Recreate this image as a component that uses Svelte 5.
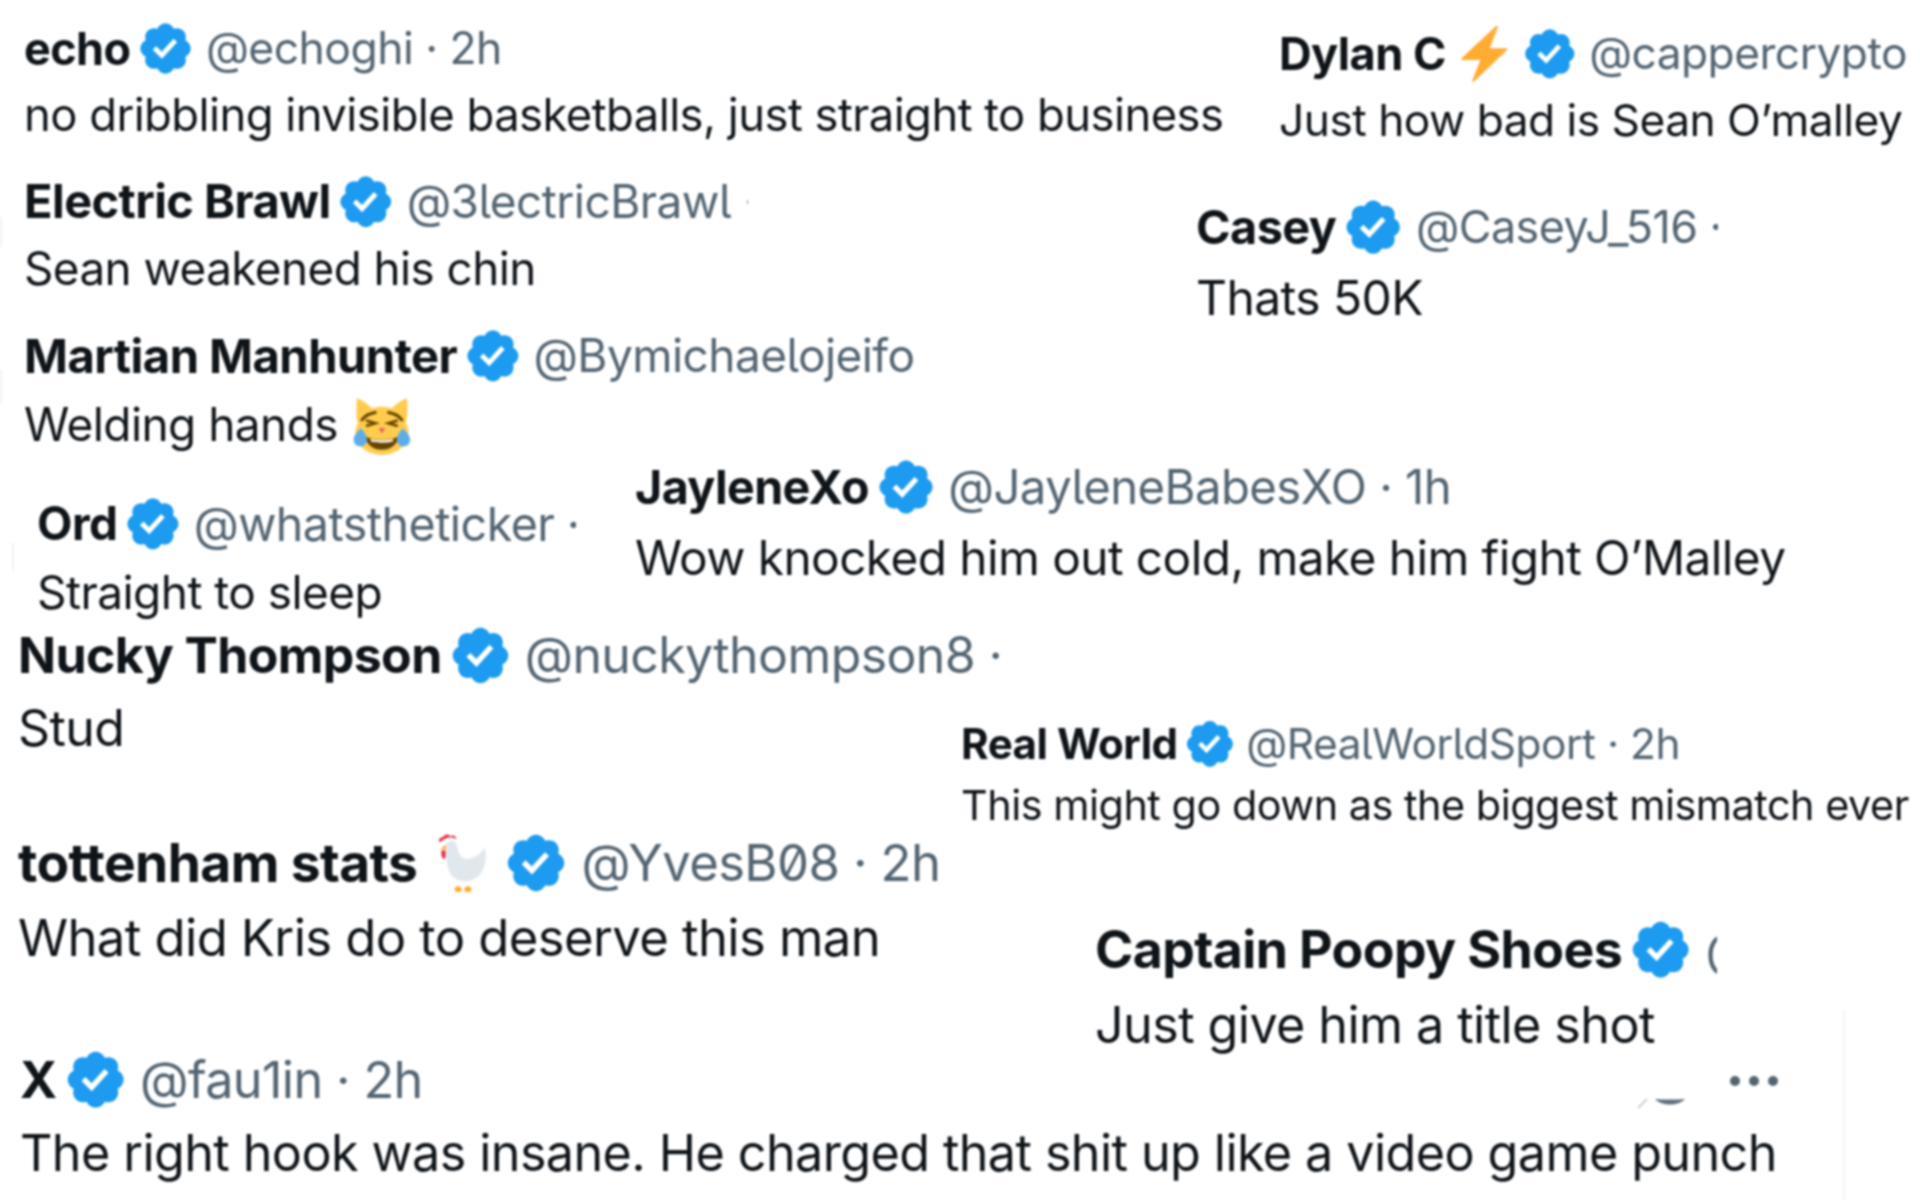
<script>
  // each snippet is a cropped reply pasted on the collage: x, y = name centre, dy = distance to body line
  // ns / hs scale the name and handle, the crops were not resized evenly
  const replies = [
    { name: 'echo', handle: '@echoghi · 2h', text: 'no dribbling invisible basketballs, just straight to business', x: 24, y: 49, dy: 66, size: 45.4, ns: 0.99, hs: 0.98 },
    { name: 'Dylan C', icon: 'bolt', handle: '@cappercrypto', text: 'Just how bad is Sean O’malley', x: 1279, y: 54, dy: 67, size: 44.3, ns: 1.02 },
    { name: 'Electric Brawl', handle: '@3lectricBrawl ·', text: 'Sean weakened his chin', x: 24, y: 202, dy: 67, size: 45.8, ns: 1.025, hs: 1.005, clip: 724 },
    { name: 'Casey', handle: '@CaseyJ_516 ·', text: 'Thats 50K', x: 1196, y: 227, dy: 71, size: 48, ns: 0.975, hs: 0.935, clip: 522 },
    { name: 'Martian Manhunter', handle: '@Bymichaelojeifo', text: 'Welding hands', cat: true, x: 24, y: 356, dy: 69, size: 46, ns: 1.026 },
    { name: 'JayleneXo', handle: '@JayleneBabesXO · 1h', text: 'Wow knocked him out cold, make him fight O’Malley', x: 635, y: 487, dy: 71, size: 47.8, ns: 0.975, hs: 0.99 },
    { name: 'Ord', handle: '@whatstheticker ·', text: 'Straight to sleep', x: 37, y: 524, dy: 69, size: 46, hs: 1.014, clip: 539 },
    { name: 'Nucky Thompson', handle: '@nuckythompson8 ·', text: 'Stud', x: 18, y: 655, dy: 73, size: 50, clip: 983 },
    { name: 'Real World', handle: '@RealWorldSport · 2h', text: 'This might go down as the biggest mismatch ever', x: 961, y: 744, dy: 62, size: 41.4, ns: 1.017, hs: 1.026 },
    { name: 'tottenham stats', icon: 'chicken', handle: '@YvesB08 · 2h', text: 'What did Kris do to deserve this man', x: 18, y: 863, dy: 75, size: 50.8, ns: 1.05 },
    { name: 'Captain Poopy Shoes', handle: '@CaptainPoopy', text: 'Just give him a title shot', x: 1095, y: 950, dy: 75, size: 50.3, ns: 1.03, clip: 622 },
    { name: 'X', handle: '@fau1in · 2h', text: 'The right hook was insane. He charged that shit up like a video game punch', x: 20, y: 1080, dy: 73, size: 50.3 }
  ];

  function place(r) {
    const top = r.y - r.size * 0.65;
    const gap = r.dy - r.size * 1.3;
    return `left:${r.x}px;top:${top}px;font-size:${r.size}px;gap:${gap}px`;
  }
</script>

<div class="collage">
  {#each replies as r}
    <div class="reply" style={place(r)}>
      <div class="head" style={r.clip ? `width:${r.clip}px` : ''}>
        <span class="name" style={r.ns ? `font-size:${r.ns}em` : ''}>{r.name}</span>
        {#if r.icon === 'bolt'}
          <svg class="flair" viewBox="0 0 36 36"><path fill="#ffac33" d="M32.9 14.5H21.3L26.6.6c.2-.7-.7-1.1-1.2-.6L3.1 20.8c-.5.5-.2 1.3.5 1.3h11.6L9.900 35.400c-.2.7.7 1.100 1.200.6l21.300-20.200c.5-.5.200-1.300-.5-1.300z"/></svg>
        {:else if r.icon === 'chicken'}
          <svg class="flair" viewBox="0 0 36 36">
            <path fill="#e1e8ed" d="M9 9c0-2.500 1.800-3.500 3.500-3.500 2.200 0 3 2.500 3.500 5.500.700 3.500 3.500 5.500 7 4.500 4-1.200 6.500-3.500 8-6.500 1.500 5.500.5 12.500-3.500 16.500-3.500 3.500-9 4-13 1.500C9.500 24.500 9 15 9 9z"/>
            <path fill="#dd2e44" d="M5.500 6.500C4.500 4.500 6 3.500 7.500 3.500 8 1.800 10.500 1.500 11.500 3c1.500-1 3.500 0 3.300 1.700-1.500-1.200-3.500-1.500-5.300-.7C8 4.600 6.600 5.500 5.500 6.500z"/>
            <path fill="#dd2e44" d="M6.500 11h2.300v3.500c0 1-.8 1.500-1.500 1.200-.8-1.300-1-3-.8-4.700z"/>
            <path fill="#ffac33" d="M8.800 7.500 6 10.500h3z"/>
            <ellipse fill="#ffac33" cx="16" cy="33" rx="2" ry="1.700"/>
            <ellipse fill="#ffac33" cx="21.500" cy="33" rx="2" ry="1.700"/>
          </svg>
        {/if}
        <svg class="badge" viewBox="0 0 24 24"><path fill="#1d9bf0" d="M22.250 12c0-1.430-.880-2.670-2.190-3.340.460-1.390.200-2.900-.810-3.910s-2.520-1.270-3.910-.810c-.660-1.310-1.910-2.190-3.340-2.190s-2.670.880-3.330 2.190c-1.400-.460-2.910-.200-3.920.810s-1.260 2.520-.800 3.910c-1.310.670-2.200 1.910-2.200 3.340s.890 2.670 2.200 3.340c-.460 1.390-.210 2.900.800 3.910s2.520 1.260 3.910.810c.670 1.310 1.910 2.190 3.340 2.190s2.680-.880 3.340-2.190c1.390.450 2.900.200 3.910-.810s1.270-2.520.81-3.910c1.310-.670 2.190-1.910 2.190-3.340zm-11.710 4.200L6.800 12.460l1.410-1.420 2.260 2.260 4.800-5.230 1.470 1.360-6.200 6.770z"/></svg>
        <span class="handle" style={r.hs ? `font-size:${r.hs}em` : ''}>{r.handle}</span>
      </div>
      <div class="body">
        {r.text}
        {#if r.cat}
          <svg class="cat" viewBox="0 0 36 36">
            <path fill="#ffcc4d" d="M33 2c-3 1-7 4-9 6-2-.700-4-1-6-1s-4 .300-6 1C10 6 6 3 3 2c-.500 5-.500 11 .500 15C2.500 19 2 21 2 23c0 7 7 13 16 13s16-6 16-13c0-2-.500-4-1.500-6 1-4 1-10 .500-15z"/>
            <path fill="none" stroke="#664500" stroke-width="1.800" stroke-linecap="round" d="M6 15c2-3 5-4 8-4.500M30 15c-2-3-5-4-8-4.500"/>
            <path fill="none" stroke="#664500" stroke-width="1.600" stroke-linecap="round" d="M9 15.500l5 1.500-5 1.500M27 15.500l-5 1.500 5 1.500"/>
            <path fill="#e75a70" d="M16 20h4l-2 3z"/>
            <path fill="#664500" d="M8 25c3 1.500 6 2 10 2s7-.500 10-2c-.500 5-5 8-10 8s-9.500-3-10-8z"/>
            <path fill="#fff" d="M11 26.500c2 .500 4.500.800 7 .800s5-.300 7-.800l-.500 1.500c-2 .500-4 .700-6.500.700s-4.500-.200-6.500-.700z"/>
            <path fill="#5dadec" d="M5.500 20c1.500 2 3.500 4 3.500 7 0 2.500-2 4-4 4s-4-1.500-4-4c0-3 2.500-5 4.500-7zM30.500 20c-1.500 2-3.500 4-3.500 7 0 2.500 2 4 4 4s4-1.500 4-4c0-3-2.500-5-4.500-7z"/>
          </svg>
        {/if}
      </div>
    </div>
  {/each}

  <!-- leftovers of the crops: faint edges on the left, menu dots and scrap at the bottom right -->
  <div class="edge e1"></div>
  <div class="edge e2"></div>
  <div class="edge e3"></div>
  <div class="more"><i></i><i></i><i></i></div>
  <svg class="scrap" viewBox="0 0 50 12">
    <path fill="none" stroke="#b8c2c9" stroke-width="1.500" d="M1 11 10 2"/>
    <path fill="#5f717e" d="M18 2c8 .800 22 .800 30 0-4 4-9 5.500-15 5.500S22 6 18 2z"/>
  </svg>
  <div class="rule"></div>
</div>

<style>
  :global(body) {
    background: #fff;
  }

  .collage {
    position: relative;
    width: 1920px;
    height: 1200px;
    overflow: hidden;
    background: #fff;
    font-family: Inter, "Liberation Sans", sans-serif;
    filter: blur(0.8px);
  }

  .reply {
    position: absolute;
    display: flex;
    flex-direction: column;
    white-space: nowrap;
    letter-spacing: -0.012em;
  }

  .head {
    display: flex;
    align-items: center;
    line-height: 1.3;
    height: 1.3em;
    overflow: hidden;
  }

  .name {
    font-weight: 700;
    color: #0f1419;
  }

  /* handles get the tailed l and slashed zero */
  .handle {
    color: #536471;
    font-feature-settings: "zero", "cv05";
  }

  .badge {
    width: 1.3em;
    height: 1.3em;
    margin: 0 0.24em 0 0.12em;
    flex: none;
  }

  .flair {
    width: 1.25em;
    height: 1.25em;
    margin: 0 0.07em 0 0.255em;
    flex: none;
  }

  .body {
    line-height: 1.3;
    color: #0f1419;
    display: flex;
    align-items: center;
    gap: 0.3em;
  }

  .cat {
    width: 1.3em;
    height: 1.3em;
  }

  .edge {
    position: absolute;
    width: 2px;
    background: #eef1f3;
  }

  .e1 {
    left: 0;
    top: 217px;
    height: 30px;
  }

  .e2 {
    left: 0;
    top: 370px;
    height: 33px;
  }

  .e3 {
    left: 12px;
    top: 543px;
    height: 28px;
  }

  .more {
    position: absolute;
    left: 1730px;
    top: 1076px;
    display: flex;
    gap: 9px;
  }

  .more i {
    width: 10px;
    height: 10px;
    border-radius: 50%;
    background: #536471;
  }

  .scrap {
    position: absolute;
    left: 1637px;
    top: 1097px;
    width: 50px;
    height: 12px;
  }

  .rule {
    position: absolute;
    left: 1843px;
    top: 1010px;
    width: 2px;
    bottom: 0;
    background: #eff3f4;
  }
</style>
